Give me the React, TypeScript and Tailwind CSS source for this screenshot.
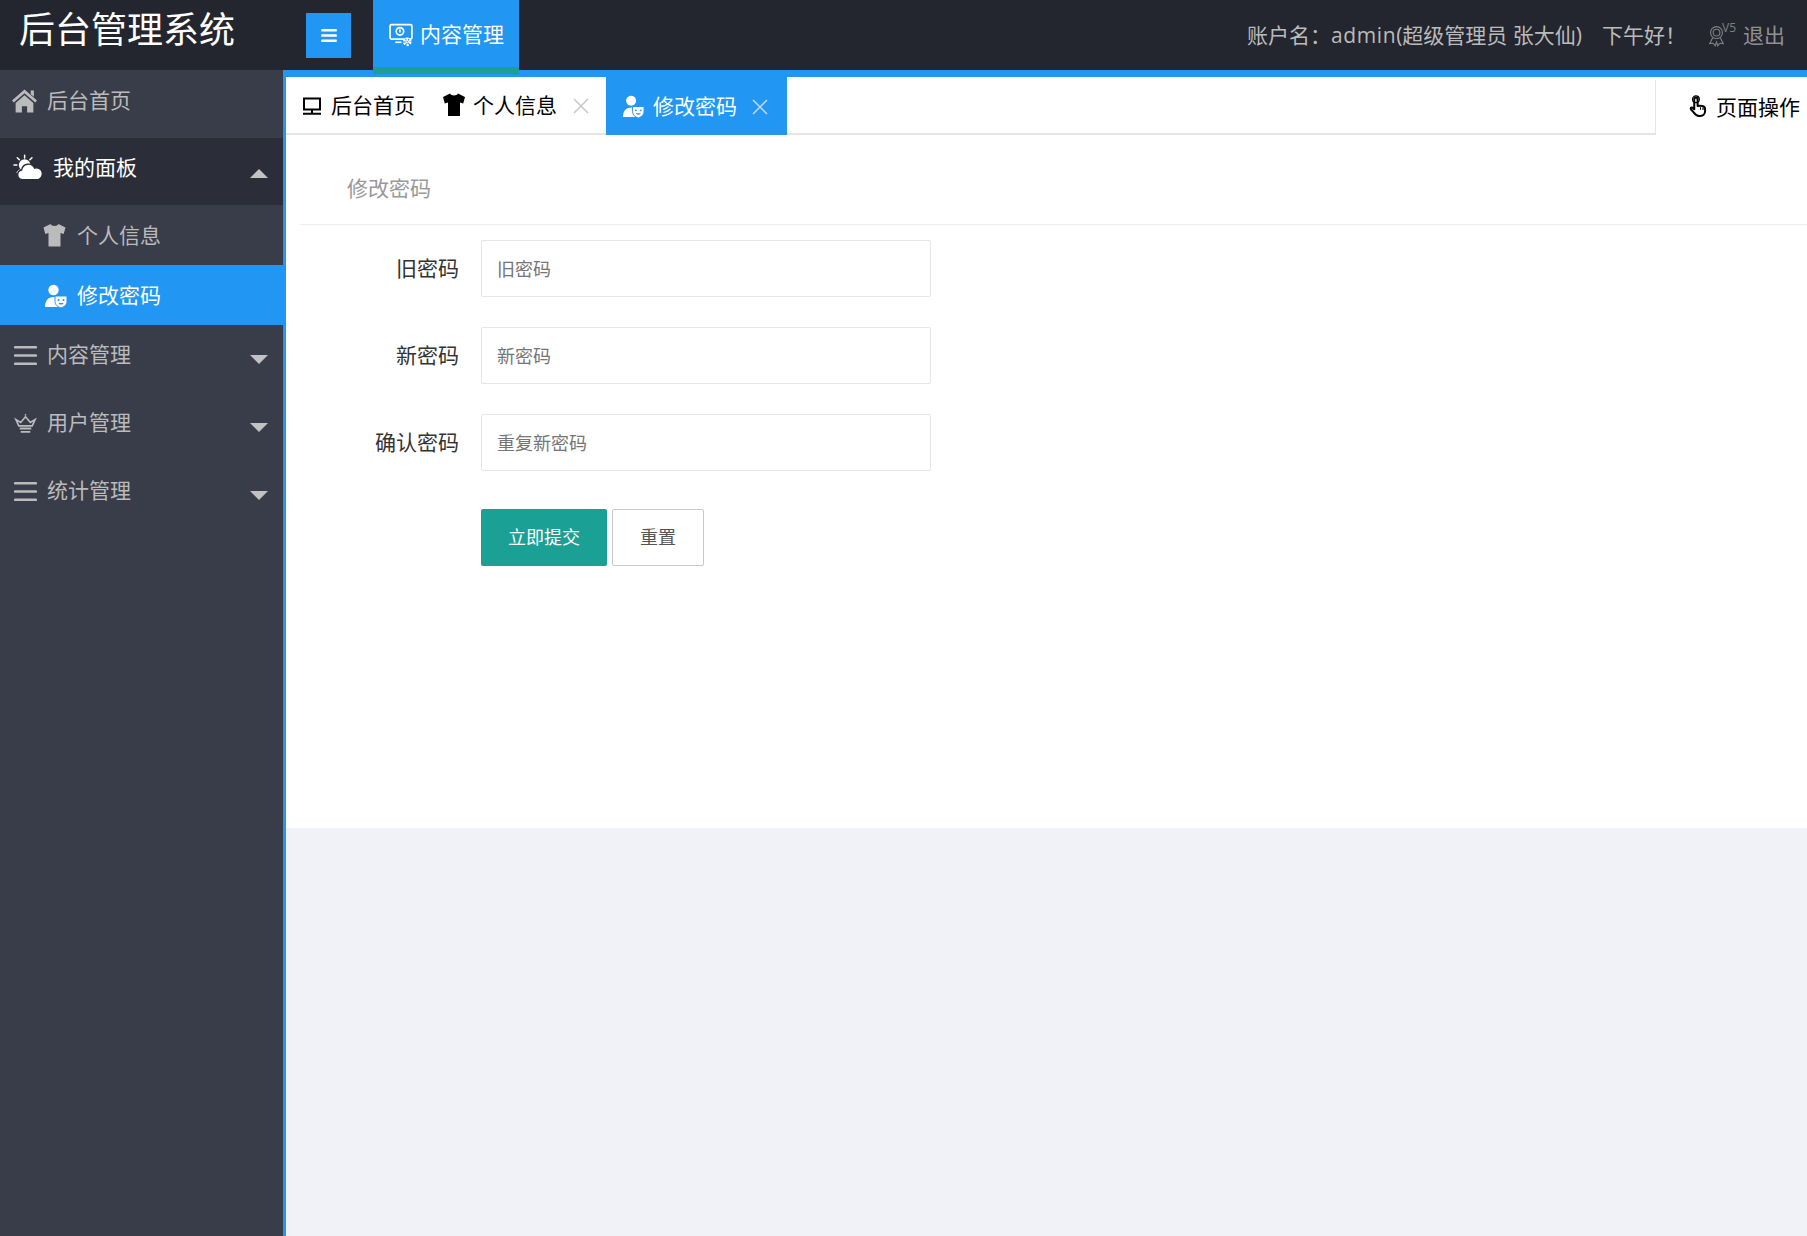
// cloud with a sun behind it
function CloudSun({ className }: { className?: string }) {
  return (
    <svg viewBox="0 0 32 27" className={className} fill="currentColor">
      <circle cx="12" cy="11" r="6" />
      <g stroke="currentColor" strokeWidth="1.500" strokeLinecap="round">
        <path d="M12 0.800v3M1 11h3M4.400 3.400l2.200 2.200M19.600 3.400l-2.200 2.200M4.400 18.600l2.200-2.200" />
      </g>
      <path
        d="M9.500 26a5 5 0 0 1-.6-9.900 7 7 0 0 1 13.300-2 5.900 5.900 0 0 1 3.800 11.900z"
        stroke="#2a2d37"
        strokeWidth="1.400"
      />
    </svg>
  );
}

function Home({ className }: { className?: string }) {
  return (
    <svg viewBox="0 0 24 22" className={className} fill="currentColor">
      <path d="M12 0 24 10.500l-1.700 2L12 3.500 1.700 12.500 0 10.500z" />
      <path d="M18 1h3v6l-3-2.600z" />
      <path d="M12 5.500 20.500 13v9H14.500v-6h-5v6H3.500v-9z" />
    </svg>
  );
}

// person with a small mask in front
function UserMask({ className, cut }: { className?: string; cut: string }) {
  return (
    <svg viewBox="0 0 24 24" className={className} fill="currentColor">
      <circle cx="9.500" cy="6" r="5.200" />
      <path d="M1 23c0-6 3-10 8.500-10 2 0 3.500.5 4.500 1.500V23z" />
      <path d="M11 12h12v5.500c0 3.500-3 5.500-6 6.500-3-1-6-3-6-6.500z" stroke={cut} strokeWidth="1" />
      <circle cx="14.500" cy="16" r="1" fill={cut} />
      <circle cx="19.500" cy="16" r="1" fill={cut} />
      <path d="M14.500 19h5c-.5 2-4.500 2-5 0z" fill={cut} />
    </svg>
  );
}

function Shirt({ className }: { className?: string }) {
  return (
    <svg viewBox="0 0 24 24" className={className} fill="currentColor">
      <path d="M8 1c1 2.500 7 2.500 8 0l7 3.500-1.800 6.500-3.200-1V23.500H6V10l-3.200 1L1 4.500z" />
    </svg>
  );
}

function Crown({ className }: { className?: string }) {
  return (
    <svg viewBox="0 0 24 20" className={className} fill="none" stroke="currentColor" strokeWidth="1.700">
      <path d="M5 12.500 2 6l5 3 5-6 5 6 5-3-3 6.500z" />
      <path d="M6 15.200h12M7 18.700h10" strokeWidth="2" />
      <circle cx="12" cy="0.900" r="0.900" fill="currentColor" stroke="none" />
    </svg>
  );
}

function Burger({ className, bar = 3.4 }: { className?: string; bar?: number }) {
  return (
    <svg viewBox="0 0 24 20" className={className} fill="currentColor">
      <rect x="0" y="0" width="24" height={bar} rx="1" />
      <rect x="0" y={10 - bar / 2} width="24" height={bar} rx="1" />
      <rect x="0" y={20 - bar} width="24" height={bar} rx="1" />
    </svg>
  );
}

function Monitor({ className }: { className?: string }) {
  return (
    <svg viewBox="0 0 20 18" className={className} fill="none" stroke="currentColor" strokeWidth="2">
      <rect x="2" y="1.500" width="16" height="11" />
      <path d="M1 16.800h18M10 12.500v4" />
    </svg>
  );
}

// screen with a coin and a gear on its corner
function ScreenGear({ className }: { className?: string }) {
  return (
    <svg viewBox="0 0 24 24" className={className} fill="none" stroke="currentColor" strokeWidth="1.600">
      <rect x="1" y="1.500" width="21" height="14" rx="1.500" />
      <circle cx="10.500" cy="8" r="3.600" />
      <path d="M10.500 6v3" />
      <path d="M6 18.500h6" />
      <circle cx="17.500" cy="18" r="3" fill="#2196f3" strokeWidth="2.400" strokeDasharray="2 1.200" />
      <circle cx="17.500" cy="18" r="1.200" strokeWidth="1" />
    </svg>
  );
}

function Medal({ className }: { className?: string }) {
  return (
    <svg viewBox="0 0 20 24" className={className} fill="none" stroke="currentColor" strokeWidth="1.300">
      <circle cx="10" cy="8" r="7" />
      <circle cx="10" cy="8" r="4" />
      <path d="M5.500 14 2 21l4-.5 2.500 3L10 19l1.500 4.500 2.500-3 4 .5-3.500-7" />
    </svg>
  );
}

function Close({ className }: { className?: string }) {
  return (
    <svg viewBox="0 0 16 16" className={className} fill="none" stroke="currentColor" strokeWidth="1.500">
      <path d="M1 1l14 14M15 1 1 15" />
    </svg>
  );
}

function SideRow({ icon, label }: { icon: React.ReactNode; label: string }) {
  return (
    <div className="flex h-[68px] items-center pb-[8px] pl-[14px] pr-[15px] text-[21px] text-[#bbbbbb]">
      <div className="flex w-[33px] shrink-0 items-center">{icon}</div>
      <span className="flex-1">{label}</span>
      <span className="mt-[8px] h-0 w-0 border-x-[9px] border-t-[9px] border-x-transparent border-t-[#c2c2c2]" />
    </div>
  );
}

function Field({ label, placeholder }: { label: string; placeholder: string }) {
  return (
    <div className="mb-[30px] flex h-[57px] items-center">
      <label className="w-[159px] pt-[1px] text-right text-[21px] text-[#333333]">{label}</label>
      <input
        placeholder={placeholder}
        className="ml-[22px] h-[57px] w-[450px] rounded-[2px] border border-[#e6e6e6] bg-white px-[15px] text-[18px] outline-none placeholder:text-[#757575]"
      />
    </div>
  );
}

export default function App() {
  return (
    <div
      className="flex h-screen min-h-[1236px] flex-col overflow-hidden bg-[#f0f2f7]"
      style={{ fontFamily: '"Open Sans", "Noto Sans CJK SC", sans-serif' }}
    >
      {/* 顶部 */}
      <header className="relative z-10 flex h-[70px] shrink-0 items-center bg-[#23262e]">
        <div className="w-[306px] whitespace-nowrap pb-[10px] pl-[19px] text-[36px] leading-none text-white">后台管理系统</div>
        <button className="flex h-[45px] w-[45px] items-center justify-center bg-[#2196f3] text-white">
          <Burger className="h-[13px] w-[16px]" bar={4} />
        </button>
        <div className="ml-[22px] flex h-[77px] w-[146px] items-start border-b-[7px] border-[#1aa094] bg-[#2196f3] text-[21px] text-white">
          <div className="flex h-[70px] items-center pl-[16px] pt-[7px]">
            <ScreenGear className="h-[25px] w-[25px]" />
            <span className="ml-[6px]">内容管理</span>
          </div>
        </div>
        <div className="ml-auto flex items-center pr-[22px] pt-[2px] text-[21px] text-[#bbbbbb]">
          <span>
            账户名：<span className="font-medium tracking-[0.6px]">admin</span>(超级管理员 张大仙)
          </span>
          <span className="ml-[20px]">下午好！</span>
          <span className="ml-[22px] flex w-[28px] items-start text-[#808080]">
            <Medal className="h-[24px] w-[20px]" />
            <span className="-ml-[3px] -mt-[2px] text-[12px] leading-none">V5</span>
          </span>
          <span className="ml-[7px] text-[#909090]">退出</span>
        </div>
      </header>

      <div className="flex min-h-0 flex-1">
        {/* 左侧菜单 */}
        <aside className="w-[283px] shrink-0 bg-[#393d49]">
          <div className="flex h-[68px] items-center pb-[7px] pl-[12px] text-[21px] text-[#bbbbbb]">
            <Home className="mr-[10px] h-[24px] w-[25px]" />
            <span>后台首页</span>
          </div>
          <div className="flex h-[67px] items-center bg-[#2b2e38] pb-[8px] pl-[13px] pr-[15px] text-[21px] text-white">
            <CloudSun className="mr-[9px] h-[27px] w-[31px]" />
            <span className="flex-1">我的面板</span>
            <span className="mt-[12px] h-0 w-0 border-x-[9px] border-b-[9px] border-x-transparent border-b-[#c2c2c2]" />
          </div>
          <div className="flex h-[60px] items-center pl-[42px] pt-[1px] text-[21px] text-[#bbbbbb]">
            <Shirt className="mb-[2px] mr-[10px] h-[24px] w-[25px]" />
            <span>个人信息</span>
          </div>
          <div className="-mr-[3px] flex h-[60px] items-center bg-[#2196f3] pl-[44px] pt-[1px] text-[21px] text-white">
            <UserMask className="mr-[9px] h-[24px] w-[24px]" cut="#2196f3" />
            <span>修改密码</span>
          </div>
          <SideRow icon={<Burger className="h-[21px] w-[23px]" bar={2.8} />} label="内容管理" />
          <SideRow icon={<Crown className="h-[21px] w-[23px]" />} label="用户管理" />
          <SideRow icon={<Burger className="h-[21px] w-[23px]" bar={2.8} />} label="统计管理" />
        </aside>

        {/* 右侧内容 */}
        <main className="min-w-0 flex-1 border-l-[3px] border-t-[7px] border-[#2196f3]">
          <div className="h-[751px] bg-white">
            <div className="flex h-[58px] text-[21px] text-black">
              <div className="flex flex-1 items-stretch border-b-2 border-[#e6e6e6] pt-[2px]">
                <div className="flex items-center pl-[16px]">
                  <Monitor className="mr-[9px] h-[18px] w-[20px]" />
                  <span>后台首页</span>
                </div>
                <div className="ml-[27px] flex items-center">
                  <Shirt className="mb-[3px] mr-[7px] h-[25px] w-[24px]" />
                  <span>个人信息</span>
                  <Close className="ml-[16px] h-[16px] w-[16px] text-[#c8c8c8]" />
                </div>
                <div className="-mb-[2px] -mt-[2px] ml-[17px] flex w-[181px] items-center bg-[#2196f3] pl-[16px] pt-[2px] text-white">
                  <UserMask className="mb-[1px] mr-[8px] h-[23px] w-[23px]" cut="#2196f3" />
                  <span>修改密码</span>
                  <Close className="ml-[15px] h-[16px] w-[16px] text-[#c8d8e8]" />
                </div>
              </div>
              <div className="flex w-[152px] shrink-0 pt-[3px]">
                <div className="flex flex-1 items-center border-l border-[#e6e6e6] pl-[32px] pt-[1px]">
                  <svg viewBox="0 0 24 28" className="mr-[8px] mt-[-6px] h-[27px] w-[20px]" fill="none" stroke="black" strokeWidth="2.400" strokeLinejoin="round">
                    <circle cx="9.500" cy="6.500" r="4" strokeWidth="1.600" />
                    <path d="M7.500 6.500c0-3 4-3 4 0v8c3-.6 9-.4 9 3.500v3c0 3-2.500 5.500-5.500 5.500h-2c-3 0-4.500-2-6-4l-3.500-4c-1-1.500 1-3 2.500-1.500l1.500 1.500z" />
                    <path d="M15 16v3M18 16.500v3" strokeWidth="1.400" />
                  </svg>
                  <span className="whitespace-nowrap">页面操作</span>
                </div>
              </div>
            </div>

            <div className="pl-[14px]">
              <div className="flex h-[90px] items-center border-b border-[#eeeeee] pl-[47px] pt-[18px] text-[21px] text-[#999999]">修改密码</div>
              <form className="pt-[15px]">
                <Field label="旧密码" placeholder="旧密码" />
                <Field label="新密码" placeholder="新密码" />
                <Field label="确认密码" placeholder="重复新密码" />
                <div className="ml-[181px] mt-[38px] flex gap-[5px] text-[18px]">
                  <button type="button" className="h-[57px] w-[126px] rounded-[2px] bg-[#1aa094] text-white">立即提交</button>
                  <button type="button" className="h-[57px] w-[92px] rounded-[2px] border border-[#c9c9c9] bg-white text-[#555555]">重置</button>
                </div>
              </form>
            </div>
          </div>
        </main>
      </div>
    </div>
  );
}
